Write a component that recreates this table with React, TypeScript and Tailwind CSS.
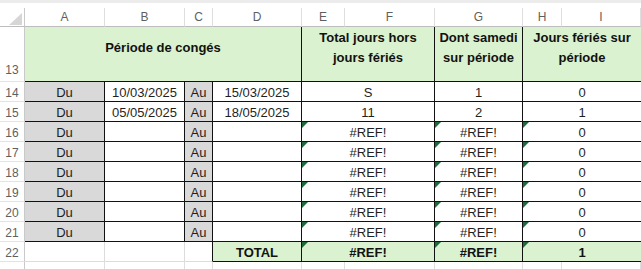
import React from "react"

const cols = ["A", "B", "C", "D", "E", "F", "G", "H", "I"]

const rows = [
  { n: 14, b: "10/03/2025", d: "15/03/2025", e: "S", g: "1", h: "0", flag: false },
  { n: 15, b: "05/05/2025", d: "18/05/2025", e: "11", g: "2", h: "1", flag: false },
  { n: 16, b: "", d: "", e: "#REF!", g: "#REF!", h: "0", flag: true },
  { n: 17, b: "", d: "", e: "#REF!", g: "#REF!", h: "0", flag: true },
  { n: 18, b: "", d: "", e: "#REF!", g: "#REF!", h: "0", flag: true },
  { n: 19, b: "", d: "", e: "#REF!", g: "#REF!", h: "0", flag: true },
  { n: 20, b: "", d: "", e: "#REF!", g: "#REF!", h: "0", flag: true },
  { n: 21, b: "", d: "", e: "#REF!", g: "#REF!", h: "0", flag: true },
]

function Flag() {
  return (
    <svg className="absolute left-0 top-0" width="6" height="6" viewBox="0 0 6 6">
      <polygon points="0,0 6,0 0,6" fill="#1d6b3a" />
    </svg>
  )
}

function RowNum({ n, end }: { n: number; end?: boolean }) {
  return (
    <div
      className={`flex justify-center ${end ? "items-end pb-[2px]" : "items-center pt-[2px]"} border-r border-b border-r-[#c9c9c9] border-b-[#e3e3e3] bg-white text-[12px] text-[#5f5f5f]`}
    >
      {n}
    </div>
  )
}

const cell = "relative flex items-end justify-center leading-[16px] text-[13px] text-[#1f1f1f] border-r border-b border-[#111]"

export default function App() {
  return (
    <div
      className="w-[641px] h-[269px] overflow-hidden bg-white"
      style={{ fontFamily: '"Liberation Sans", Arial, sans-serif' }}
    >
      <div className="grid grid-cols-[25px_80px_80px_28px_89px_43px_90px_88px_39px_79px] grid-rows-[8px_19px_55px_repeat(9,20px)_7px]">
        {/* top strip */}
        <div className="col-span-10 bg-white">
          <div className="h-[3px] bg-[#ececec]" />
        </div>

        {/* column headers */}
        <div className="relative border-r border-b border-r-[#c9c9c9] border-b-[#bdbdbd] bg-white">
          <svg className="absolute left-[9px] top-[5px]" width="13" height="12" viewBox="0 0 13 12">
            <polygon points="13,0 13,12 0,12" fill="#d6d6d6" />
          </svg>
        </div>
        {cols.map((c) => (
          <div
            key={c}
            className="flex items-center justify-center border-r border-b border-r-[#dedede] border-b-[#bdbdbd] bg-white text-[12px] text-[#5f5f5f]"
          >
            {c}
          </div>
        ))}

        {/* row 13 */}
        <RowNum n={13} end />
        <div className="col-span-4 flex items-center justify-center pb-[13px] bg-[#daf2d0] border-r border-b border-[#111] text-[13px] font-bold text-[#111]">
          Période de congés
        </div>
        <div className="col-span-2 flex items-center justify-center pb-[13px] bg-[#daf2d0] border-r border-b border-[#111] text-[13px] font-bold text-[#111] leading-[20px] text-center">
          Total jours hors
          <br />
          jours fériés
        </div>
        <div className="flex items-center justify-center pb-[13px] bg-[#daf2d0] border-r border-b border-[#111] text-[13px] font-bold text-[#111] leading-[20px] text-center">
          Dont samedi
          <br />
          sur période
        </div>
        <div className="col-span-2 flex items-center justify-center pb-[13px] bg-[#daf2d0] border-b border-[#111] text-[13px] font-bold text-[#111] leading-[20px] text-center">
          Jours fériés sur
          <br />
          période
        </div>

        {/* data rows */}
        {rows.map((r) => (
          <React.Fragment key={r.n}>
            <RowNum n={r.n} />
            <div className={`${cell} bg-[#d9d9d9]`}>Du</div>
            <div className={`${cell} bg-white`}>{r.b}</div>
            <div className={`${cell} bg-[#d9d9d9]`}>Au</div>
            <div className={`${cell} bg-white`}>{r.d}</div>
            <div className={`${cell} col-span-2 bg-white`}>
              {r.flag && <Flag />}
              {r.e}
            </div>
            <div className={`${cell} bg-white`}>
              {r.flag && <Flag />}
              {r.g}
            </div>
            <div className={`${cell} col-span-2 bg-white border-r-0`}>
              {r.flag && <Flag />}
              {r.h}
            </div>
          </React.Fragment>
        ))}

        {/* row 22 */}
        <RowNum n={22} />
        <div className="border-r border-b border-[#dcdcdc] bg-white" />
        <div className="border-r border-b border-[#dcdcdc] bg-white" />
        <div className="border-r border-b border-b-[#dcdcdc] border-r-[#111] bg-white" />
        <div className={`${cell} bg-[#daf2d0] font-bold text-[#111]`}>TOTAL</div>
        <div className={`${cell} col-span-2 bg-[#daf2d0] font-bold text-[#111]`}>
          <Flag />
          #REF!
        </div>
        <div className={`${cell} bg-[#daf2d0] font-bold text-[#111]`}>
          <Flag />
          #REF!
        </div>
        <div className={`${cell} col-span-2 bg-[#daf2d0] border-r-0 font-bold text-[#111]`}>
          <Flag />1
        </div>

        {/* partial row 23 */}
        <div className="border-r border-r-[#c9c9c9] bg-white" />
        {cols.map((c) => (
          <div key={c} className="border-r border-[#dedede] bg-white" />
        ))}
      </div>
    </div>
  )
}
